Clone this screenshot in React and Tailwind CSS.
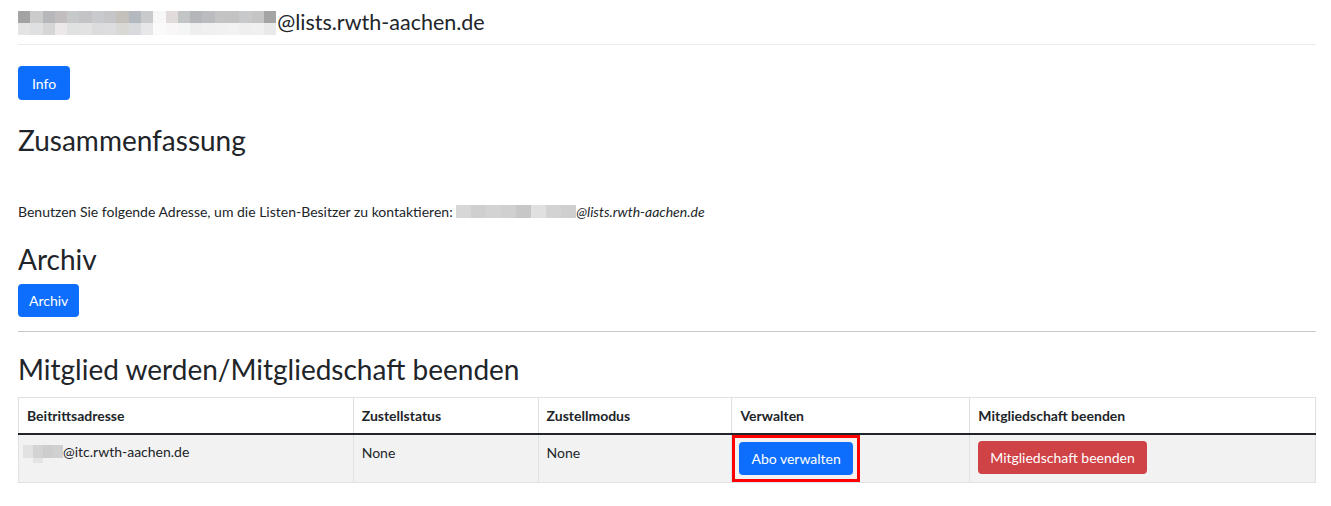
import React from "react";

const topRow1 = ["#a3a3a3", "#cbcbcb", "#b5b7ba", "#c2bdbf", "#c6c9ca", "#c3c2c4", "#c8cace", "#c6c6c8", "#c4c0bb", "#b4b8bf", "#c9cacc", "#f7f7f7", "#e1dcdb", "#c2c5c6", "#b4b6b9", "#bbbcbf", "#c4c4c5", "#c3c3c4", "#c8c9ca", "#c5c5c6", "#a4a4a4"];
const topRow2 = ["#e4e4e4", "#dfe0e2", "#d6d6d6", "#ece8e9", "#e0e2e2", "#e2e2e3", "#dcdcdf", "#dddddf", "#dad8d4", "#d9dade", "#e7e7e9", "#fafafa", "#f8f6f6", "#f4f5f5", "#eeeeef", "#f0f0f1", "#f1f1f1", "#f2f2f2", "#efefef", "#f0f0f0", "#e9e9ea"];

const Blur = ({ cells, w, h }) => (
  <span className="inline-flex align-middle">
    {cells.map((c, i) => (
      <span key={i} style={{ background: c, width: w, height: h }} />
    ))}
  </span>
);

const TopBlur = () => (
  <span className="inline-flex flex-col mr-[1px]">
    <span className="flex">
      {topRow1.map((c, i) => (
        <span key={i} className="w-[12.3px] h-[12px]" style={{ background: c }} />
      ))}
    </span>
    <span className="flex">
      {topRow2.map((c, i) => (
        <span key={i} className="w-[12.3px] h-[12px]" style={{ background: c }} />
      ))}
    </span>
  </span>
);

const columns = [
  { id: "addr", label: "Beitrittsadresse", width: 335 },
  { id: "status", label: "Zustellstatus", width: 185 },
  { id: "mode", label: "Zustellmodus", width: 194 },
  { id: "manage", label: "Verwalten", width: 238 },
  { id: "end", label: "Mitgliedschaft beenden", width: 346 },
];

const App = () => {
  return (
    <div className="px-[18px] pr-[15px] text-[#212529] bg-white min-h-[506px]" style={{ fontFamily: "Lato, 'Noto Sans', sans-serif" }}>
      <div className="flex items-center h-[45px] border-b border-[#e9ecef] pt-[1px]">
        <TopBlur />
        <span className="text-[21.5px] leading-none">@lists.rwth-aachen.de</span>
      </div>

      <button className="mt-[21px] h-[34px] px-[14px] rounded bg-[#0d6efd] text-white text-[14px]">Info</button>

      <h3 className="text-[28px] leading-[1.2] mt-[24px]">Zusammenfassung</h3>

      <p className="text-[14px] mt-[43px] flex items-center">
        Benutzen Sie folgende Adresse, um die Listen-Besitzer zu kontaktieren:&nbsp;
        <Blur cells={["#d7d7d7", "#cfcfcf", "#d3d3d3", "#d0d0d0", "#c7c7c7", "#e0e0e0", "#d3d3d3", "#cfcfcf"]} w={15} h={13} />
        <i>@lists.rwth-aachen.de</i>
      </p>

      <h2 className="text-[28px] leading-[1.2] mt-[21px]">Archiv</h2>
      <button className="mt-[8px] h-[33px] px-[11px] rounded bg-[#0d6efd] text-white text-[14px]">Archiv</button>

      <hr className="mt-[14px] border-t border-[#c6c7c8]" />

      <h3 className="text-[28px] leading-[1.2] mt-[21px]">Mitglied werden/Mitgliedschaft beenden</h3>

      <table className="mt-[10px] w-[1298px] border-collapse text-[14px]">
        <thead>
          <tr className="h-[37px]">
            {columns.map((c) => (
              <th
                key={c.id}
                style={{ width: c.width }}
                className="text-left font-bold px-[8px] border border-[#dee2e6] border-b-2 border-b-[#212529]"
              >
                {c.label}
              </th>
            ))}
          </tr>
        </thead>
        <tbody>
          <tr className="bg-[#f2f2f2] h-[47px] align-top">
            <td className="border border-[#dee2e6] px-[4px] pt-[7px]">
              <span className="inline-flex items-start">
                <span className="inline-flex flex-col">
                  <span className="flex">
                    <span className="w-[10px] h-[13px] bg-[#e2e2e2]" />
                    <span className="w-[10px] h-[13px] bg-[#d3d3d3]" />
                    <span className="w-[10px] h-[13px] bg-[#cdcdcd]" />
                    <span className="w-[10px] h-[13px] bg-[#d0d0d0]" />
                  </span>
                  <span className="flex">
                    <span className="w-[10px] h-[5px] bg-[#f2f2f2]" />
                    <span className="w-[10px] h-[5px] bg-[#e4e4e4]" />
                  </span>
                </span>
                <span className="leading-[14px]">@itc.rwth-aachen.de</span>
              </span>
            </td>
            <td className="border border-[#dee2e6] px-[8px] pt-[7px]">None</td>
            <td className="border border-[#dee2e6] px-[8px] pt-[7px]">None</td>
            <td className="border border-[#dee2e6] p-0 align-top">
              <div className="inline-block border-[3px] border-[#ff0000] p-[4px]">
                <button className="h-[33px] px-[12px] rounded bg-[#0d6efd] text-white text-[14px]">Abo verwalten</button>
              </div>
            </td>
            <td className="border border-[#dee2e6] px-[8px] pt-[6px]">
              <button className="h-[33px] px-[12px] rounded bg-[#cf4245] text-white text-[14px]">Mitgliedschaft beenden</button>
            </td>
          </tr>
        </tbody>
      </table>
    </div>
  );
};

export default App;
